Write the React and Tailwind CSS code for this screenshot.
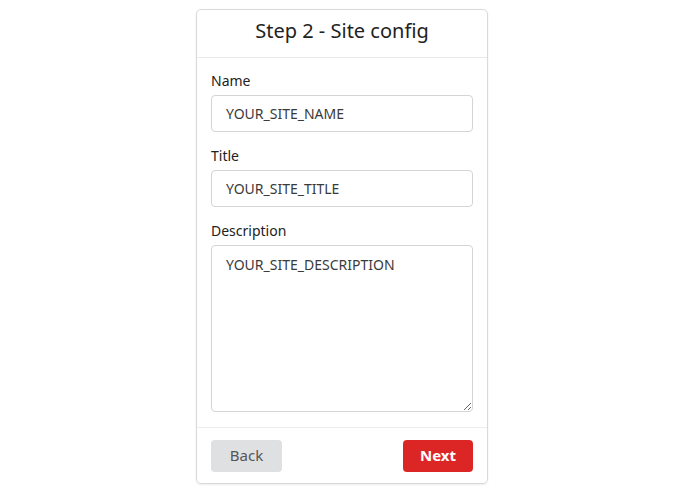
export default function App() {
  return (
    <div className="min-h-[495px] w-full bg-white flex justify-center pl-[9px] pt-[9px] font-['Noto_Sans',sans-serif] text-[#333]">
      <div className="w-[292px] h-[475px] border border-[#d9d9d9] rounded-[5px] flex flex-col shadow-[0_1px_2px_rgba(0,0,0,0.08)]">
        <div className="h-[48px] pb-[5px] flex items-center justify-center border-b border-[#e9e9e9] text-[20px] text-[#222]">
          Step 2 - Site config
        </div>
        <div className="flex-1 px-[14px] pt-[13px] flex flex-col">
          <label className="text-[14px] text-[#222] leading-[20px] mb-[4px]">Name</label>
          <input readOnly value="YOUR_SITE_NAME" className="h-[37px] border border-[#d4d4d4] rounded-[4px] px-[14px] text-[14px] text-[#3a3a3a] outline-none" />
          <label className="text-[14px] text-[#222] leading-[20px] mt-[14px] mb-[4px]">Title</label>
          <input readOnly value="YOUR_SITE_TITLE" className="h-[37px] border border-[#d4d4d4] rounded-[4px] px-[14px] text-[14px] text-[#3a3a3a] outline-none" />
          <label className="text-[14px] text-[#222] leading-[20px] mt-[14px] mb-[4px]">Description</label>
          <textarea readOnly value="YOUR_SITE_DESCRIPTION" className="h-[167px] border border-[#d4d4d4] rounded-[4px] px-[14px] py-[9px] leading-[20px] text-[14px] text-[#3a3a3a] outline-none resize-y" />
        </div>
        <div className="h-[56px] border-t border-[#ececec] px-[14px] flex items-center justify-between">
          <button className="w-[71px] h-[32px] rounded-[4px] bg-[#dfe0e2] text-[#555] text-[15px]">Back</button>
          <button className="w-[70px] h-[32px] rounded-[4px] bg-[#dc2626] text-white text-[15px] font-bold">Next</button>
        </div>
      </div>
    </div>
  );
}
